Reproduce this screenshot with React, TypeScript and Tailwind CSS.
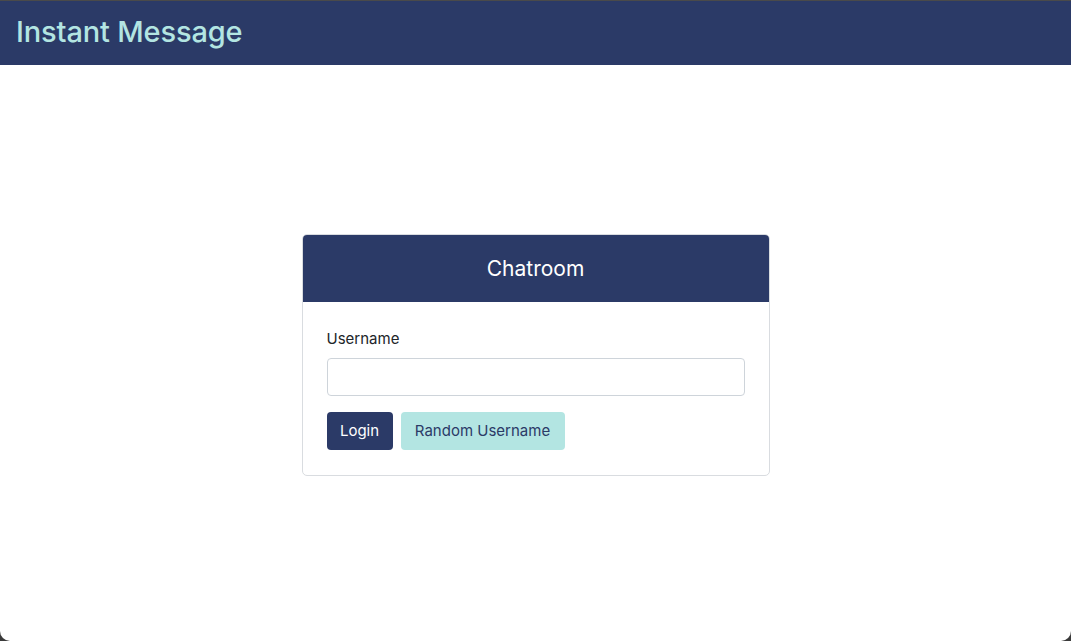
import { useState } from 'react';

const names = ['BlueFox', 'QuietOwl', 'SunnyOtter', 'NeonPanda', 'LuckyLynx'];

export default function App() {
  const [username, setUsername] = useState('');

  return (
    <div className="h-[641px] w-full bg-[#3a3a3a] font-['Inter','Liberation_Sans',sans-serif]">
      <div className="flex h-full flex-col overflow-hidden rounded-b-[10px] bg-white">
        {/* Navbar */}
        <div className="flex h-[65px] shrink-0 items-center border-t border-[#4a4a4a] bg-[#2b3a67] px-4 pb-1">
          <h1 className="text-[29px] font-medium leading-none tracking-[-0.15px] text-[#b3e5e2]">Instant Message</h1>
        </div>

        {/* Content */}
        <div className="flex flex-1 items-center justify-center pt-[4px]">
          <div className="w-[468px] overflow-hidden rounded-[5px] border border-[#d9dce0] bg-white">
            <div className="flex h-[67px] items-center justify-center bg-[#2b3a67]">
              <h2 className="text-[21px] text-white">Chatroom</h2>
            </div>
            <div className="px-6 pt-[26px] pb-[25px]">
              <label className="mb-[7px] block text-[15px] text-[#212529]">Username</label>
              <input
                type="text"
                value={username}
                onChange={(e) => setUsername(e.target.value)}
                className="block h-[38px] w-full rounded-[4px] border border-[#ced4da] px-3 text-[15px] text-[#212529] outline-none"
              />
              <div className="mt-4 flex gap-2">
                <button className="h-[38px] w-[66px] rounded-[4px] bg-[#2b3a67] text-[15px] text-white">Login</button>
                <button
                  onClick={() => setUsername(names[Math.floor(Math.random() * names.length)])}
                  className="h-[38px] w-[164px] rounded-[4px] bg-[#b3e5e2] text-[15px] text-[#2b3a67]"
                >
                  Random Username
                </button>
              </div>
            </div>
          </div>
        </div>
      </div>
    </div>
  );
}
